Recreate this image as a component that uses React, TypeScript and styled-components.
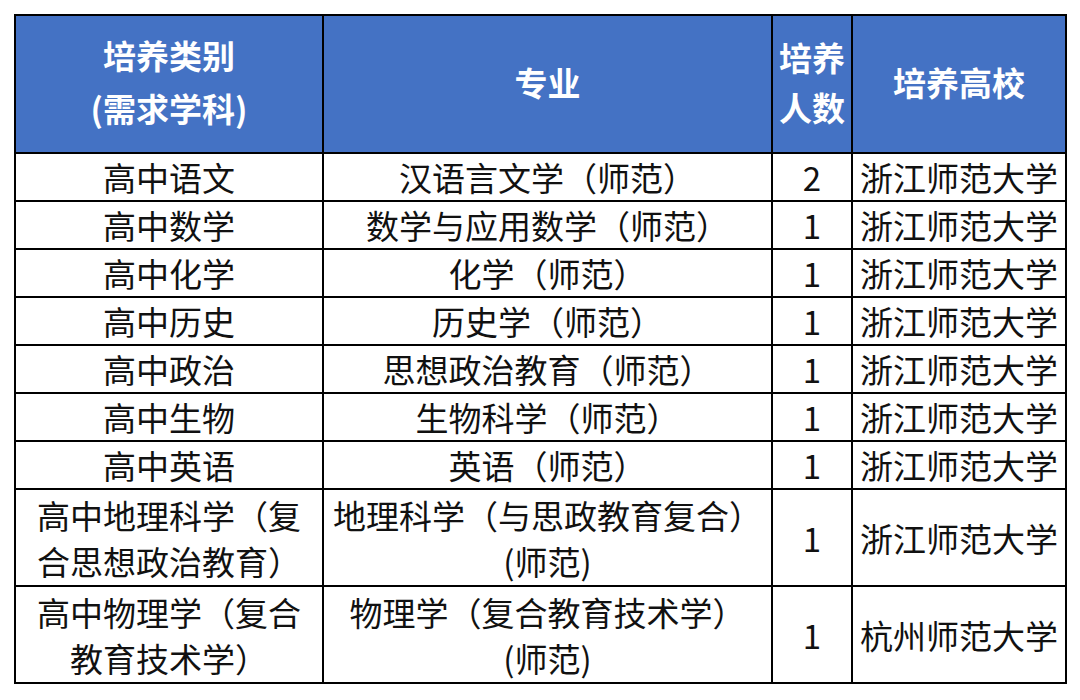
import React from "react";
import styled, { createGlobalStyle } from "styled-components";

const GlobalStyle = createGlobalStyle`
  html, body {
    margin: 0;
    padding: 0;
    background: #ffffff;
  }
  body {
    font-family: "Noto Sans CJK SC", "Noto Sans", sans-serif;
  }
`;

const Page = styled.div`
  padding: 14px 0 0 14px;
`;

const Table = styled.table`
  border-collapse: collapse;
  table-layout: fixed;
  width: 1051px;
  border: 2px solid #000;
`;

const HeadCell = styled.th<{ $lh?: number }>`
  background: #4472c4;
  color: #ffffff;
  font-weight: 700;
  font-size: 33px;
  line-height: ${(p) => p.$lh ?? 53}px;
  height: 132px;
  padding: 0 0 4px;
  text-align: center;
  vertical-align: middle;
  border: 2px solid #000;
`;

const Cell = styled.td<{ $tall?: boolean }>`
  color: #111;
  font-size: 33px;
  line-height: 46px;
  height: ${(p) => (p.$tall ? 95 : 46)}px;
  padding: 0;
  text-align: center;
  vertical-align: middle;
  border: 2px solid #000;
  white-space: nowrap;
  overflow: hidden;
`;

type Row = {
  subject: React.ReactNode;
  major: React.ReactNode;
  count: number;
  school: string;
  tall?: boolean;
};

const rows: Row[] = [
  { subject: "高中语文", major: "汉语言文学（师范）", count: 2, school: "浙江师范大学" },
  { subject: "高中数学", major: "数学与应用数学（师范）", count: 1, school: "浙江师范大学" },
  { subject: "高中化学", major: "化学（师范）", count: 1, school: "浙江师范大学" },
  { subject: "高中历史", major: "历史学（师范）", count: 1, school: "浙江师范大学" },
  { subject: "高中政治", major: "思想政治教育（师范）", count: 1, school: "浙江师范大学" },
  { subject: "高中生物", major: "生物科学（师范）", count: 1, school: "浙江师范大学" },
  { subject: "高中英语", major: "英语（师范）", count: 1, school: "浙江师范大学" },
  {
    subject: (
      <>
        高中地理科学（复
        <br />
        合思想政治教育）
      </>
    ),
    major: (
      <>
        地理科学（与思政教育复合）
        <br />
        (师范)
      </>
    ),
    count: 1,
    school: "浙江师范大学",
    tall: true,
  },
  {
    subject: (
      <>
        高中物理学（复合
        <br />
        教育技术学）
      </>
    ),
    major: (
      <>
        物理学（复合教育技术学）
        <br />
        (师范)
      </>
    ),
    count: 1,
    school: "杭州师范大学",
    tall: true,
  },
];

export default function App() {
  return (
    <Page>
      <GlobalStyle />
      <Table>
        <colgroup>
          <col style={{ width: 308 }} />
          <col style={{ width: 449 }} />
          <col style={{ width: 80 }} />
          <col style={{ width: 214 }} />
        </colgroup>
        <thead>
          <tr>
            <HeadCell>
              培养类别
              <br />
              (需求学科)
            </HeadCell>
            <HeadCell>专业</HeadCell>
            <HeadCell $lh={50}>
              培养
              <br />
              人数
            </HeadCell>
            <HeadCell>培养高校</HeadCell>
          </tr>
        </thead>
        <tbody>
          {rows.map((r, i) => (
            <tr key={i}>
              <Cell $tall={r.tall}>{r.subject}</Cell>
              <Cell $tall={r.tall}>{r.major}</Cell>
              <Cell $tall={r.tall}>{r.count}</Cell>
              <Cell $tall={r.tall}>{r.school}</Cell>
            </tr>
          ))}
        </tbody>
      </Table>
    </Page>
  );
}
